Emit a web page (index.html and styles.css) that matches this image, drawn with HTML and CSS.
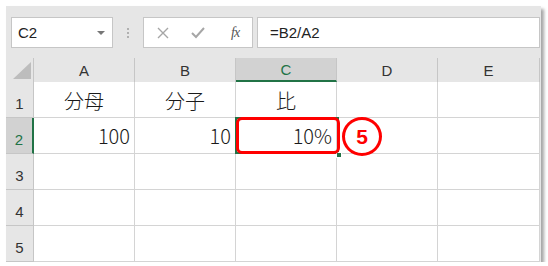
FILE: index.html
```html
<!DOCTYPE html>
<html lang="ja">
<head>
  <meta charset="UTF-8">
  <title>Excel</title>
  <link rel="stylesheet" href="styles.css">
</head>
<body>

<div class="window">
  <div class="formula-bar">
    <div class="name-box">
      <span>C2</span>
      <span class="caret"></span>
    </div>
    <div class="sep"><i></i><i></i><i></i></div>
    <div class="fx-buttons">
      <svg width="12" height="12" viewBox="0 0 12 12"><path d="M1 1 L11 11 M11 1 L1 11" stroke="#a6a6a6" stroke-width="1.4" fill="none"/></svg>
      <svg width="14" height="12" viewBox="0 0 14 12"><path d="M1 6 L5 10 L13 1" stroke="#a6a6a6" stroke-width="2" fill="none"/></svg>
      <span class="fx">fx</span>
    </div>
    <div class="formula">=B2/A2</div>
  </div>

  <div class="sheet">
    <div class="corner">
      <svg width="18" height="17" viewBox="0 0 18 17"><polygon points="18,0 18,17 0,17" fill="#bdbdbd"/></svg>
    </div>
    <div class="col-head">A</div>
    <div class="col-head">B</div>
    <div class="col-head active">C</div>
    <div class="col-head">D</div>
    <div class="col-head">E</div>

    <div class="row-head">1</div>
    <div class="cell center">分母</div>
    <div class="cell center">分子</div>
    <div class="cell center">比</div>
    <div class="cell"></div>
    <div class="cell"></div>

    <div class="row-head active">2</div>
    <div class="cell num">100</div>
    <div class="cell num">10</div>
    <div class="cell num">10%</div>
    <div class="cell"></div>
    <div class="cell"></div>

    <div class="row-head">3</div>
    <div class="cell"></div>
    <div class="cell"></div>
    <div class="cell"></div>
    <div class="cell"></div>
    <div class="cell"></div>

    <div class="row-head">4</div>
    <div class="cell"></div>
    <div class="cell"></div>
    <div class="cell"></div>
    <div class="cell"></div>
    <div class="cell"></div>

    <div class="row-head">5</div>
    <div class="cell"></div>
    <div class="cell"></div>
    <div class="cell"></div>
    <div class="cell"></div>
    <div class="cell"></div>

    <!-- selection and annotations over the grid -->
    <div class="selection"></div>
    <div class="fill-handle"></div>
    <div class="mark-box"></div>
    <div class="mark-num">5</div>
  </div>
</div>

</body>
</html>
```

FILE: styles.css
```css
body {
  margin: 0;
  background-color: #fff;
  font-family: 'Liberation Sans', Arial, sans-serif;
}
.window {
  margin: 6px 0 0 6px;
  width: 535px;
  height: 256px;
  background-color: #e6e6e6;
  box-shadow: 3px 3px 3px rgba(0, 0, 0, 0.35);
}

/* formula bar */
.formula-bar {
  height: 52px;
  padding: 11px 0 0 5px;
  box-sizing: border-box;
  display: flex;
  align-items: flex-start;
}
.name-box {
  width: 102px;
  height: 31px;
  box-sizing: border-box;
  background-color: #fff;
  border: 1px solid #c6c6c6;
  display: flex;
  align-items: center;
  justify-content: space-between;
  padding: 0 7px 0 6px;
  font-size: 15px;
  color: #222;
}
.caret {
  width: 0;
  height: 0;
  border-left: 4px solid transparent;
  border-right: 4px solid transparent;
  border-top: 4px solid #777;
}
.sep {
  width: 30px;
  height: 31px;
  display: flex;
  flex-direction: column;
  align-items: center;
  justify-content: center;
  gap: 2px;
}
.sep i {
  width: 2px;
  height: 2px;
  background-color: #b0b0b0;
}
.fx-buttons {
  width: 110px;
  height: 31px;
  box-sizing: border-box;
  background-color: #fff;
  border: 1px solid #c6c6c6;
  display: flex;
  align-items: center;
  padding-left: 13px;
  gap: 22px;
}
.fx {
  font-family: 'Liberation Serif', 'Times New Roman', serif;
  font-style: italic;
  font-size: 14px;
  color: #555;
  letter-spacing: -1px;
  margin-left: 4px;
}
.formula {
  flex: 1;
  height: 31px;
  box-sizing: border-box;
  margin-left: 4px;
  margin-right: 1px;
  background-color: #fff;
  border: 1px solid #c6c6c6;
  display: flex;
  align-items: center;
  padding-left: 12px;
  font-size: 15px;
  color: #222;
}

/* sheet grid */
.sheet {
  position: relative;
  display: grid;
  grid-template-columns: 28px 101px 101px 101px 101px 102px;
  grid-template-rows: 24px repeat(5, 36px);
}
.sheet > div {
  box-sizing: border-box;
}
.corner {
  border-right: 1px solid #c6c6c6;
  display: flex;
  align-items: flex-end;
  justify-content: flex-end;
  padding: 0 2px 3px 0;
}
.col-head {
  border-right: 1px solid #c6c6c6;
  display: flex;
  align-items: center;
  justify-content: center;
  font-size: 15px;
  color: #333;
}
.col-head.active {
  background-color: #d2d2d2;
  color: #217346;
  border-bottom: 2px solid #217346;
}
.row-head {
  border-bottom: 1px solid #c6c6c6;
  border-right: 1px solid #c6c6c6;
  display: flex;
  align-items: flex-end;
  justify-content: center;
  padding-bottom: 5px;
  font-size: 15px;
  color: #333;
}
.row-head.active {
  background-color: #d2d2d2;
  color: #217346;
  border-right: 2px solid #217346;
}
.cell {
  background-color: #fff;
  border-right: 1px solid #d4d4d4;
  border-bottom: 1px solid #d4d4d4;
  display: flex;
  align-items: center;
  font-family: 'Noto Sans CJK JP', 'Liberation Sans', sans-serif;
  font-size: 20px;
  font-weight: 300;
  line-height: 1;
  color: #1a1a1a;
}
.cell.center {
  justify-content: center;
  padding-top: 2px;
}
.cell.num {
  justify-content: flex-end;
  padding-right: 4px;
}

.selection {
  position: absolute;
  left: 229px;
  top: 59px;
  width: 104px;
  height: 37px;
  border: 2px solid #217346;
}
.fill-handle {
  position: absolute;
  left: 330px;
  top: 94px;
  width: 6px;
  height: 6px;
  background-color: #217346;
  border: 1px solid #fff;
}
.mark-box {
  position: absolute;
  left: 230px;
  top: 59px;
  width: 104px;
  height: 37px;
  border: 3px solid #f00;
  border-radius: 6px;
}
.mark-num {
  position: absolute;
  left: 336px;
  top: 59px;
  width: 40px;
  height: 39px;
  border: 3px solid #f00;
  border-radius: 50%;
  display: flex;
  align-items: center;
  justify-content: center;
  font-size: 21px;
  font-weight: bold;
  color: #f00;
}
```
